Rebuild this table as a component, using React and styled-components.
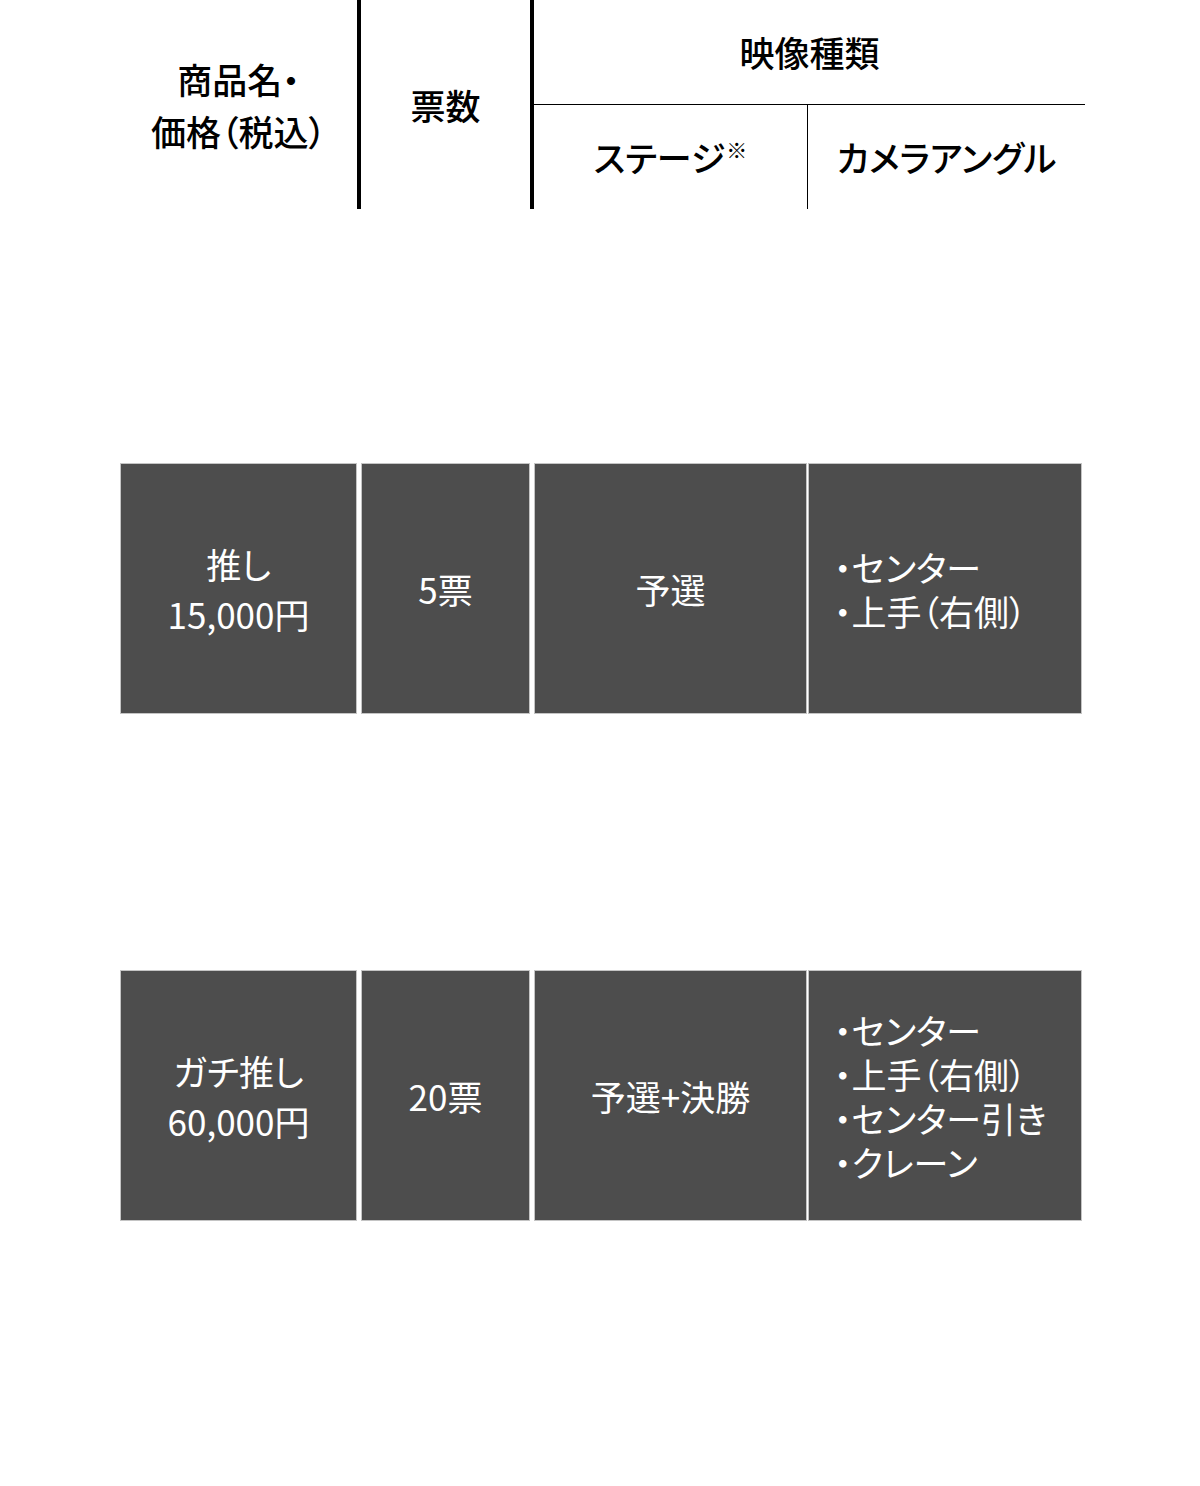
import React from "react";
import styled, { createGlobalStyle } from "styled-components";

const Global = createGlobalStyle`
  html, body { margin: 0; padding: 0; background: #ffffff; }
  body {
    font-family: "Noto Sans CJK JP", "Noto Sans", sans-serif;
    -webkit-font-smoothing: antialiased;
  }
`;

const Page = styled.div`
  width: 1200px;
  min-height: 1486px;
  box-sizing: border-box;
  padding: 0 118px 0 120px;
  display: flex;
  flex-direction: column;
`;

const Header = styled.div`
  display: grid;
  grid-template-columns: 241px 173px 274px 277px;
  grid-template-rows: 105px 104px;
  color: #000;
  font-weight: 500;
  font-size: 35px;
  font-feature-settings: "palt";
`;

const HeadCell = styled.div`
  display: flex;
  align-items: center;
  justify-content: center;
  text-align: center;
  line-height: 52px;
  box-sizing: border-box;
  grid-column: ${(p) => p.$col || "auto"};
  grid-row: ${(p) => p.$row || "auto"};
  border-right: ${(p) => (p.$rule ? `${p.$rule}px solid #000` : "none")};
  border-bottom: ${(p) => (p.$under ? "1px solid #000" : "none")};
`;

const Note = styled.span`
  font-size: 21px;
  font-weight: 400;
  line-height: 1;
  position: relative;
  top: -8px;
  margin-left: 1px;
`;

const Rows = styled.div`
  display: flex;
  flex-direction: column;
  gap: 256px;
  margin-top: 254px;
`;

const Row = styled.div`
  display: grid;
  grid-template-columns: 241px 173px 274px 274px;
  height: 251px;
`;

const Cell = styled.div`
  background: #4d4d4d;
  border: 1px solid #c4c4c4;
  box-sizing: border-box;
  margin-right: ${(p) => p.$gap || 0}px;
  color: #fff;
  font-weight: 400;
  font-size: 35px;
  font-feature-settings: "palt";
  display: flex;
  align-items: center;
  justify-content: ${(p) => (p.$left ? "flex-start" : "center")};
  padding-left: ${(p) => (p.$left ? 25 : 0)}px;
  text-align: center;
  line-height: 50px;
`;

const List = styled.ul`
  list-style: none;
  margin: 0;
  padding: 0;
  text-align: left;
  line-height: 44px;
`;

const Item = styled.li`
  margin: 0;
  white-space: nowrap;
`;

const rows = [
  {
    name: ["推し", "15,000円"],
    votes: "5票",
    stage: "予選",
    angles: ["センター", "上手（右側）"],
  },
  {
    name: ["ガチ推し", "60,000円"],
    votes: "20票",
    stage: "予選+決勝",
    angles: ["センター", "上手（右側）", "センター引き", "クレーン"],
  },
];

export default function App() {
  return (
    <>
      <Global />
      <Page>
        <Header>
          <HeadCell $col="1" $row="1 / span 2" $rule={4}>
            商品名・
            <br />
            価格（税込）
          </HeadCell>
          <HeadCell $col="2" $row="1 / span 2" $rule={4}>
            票数
          </HeadCell>
          <HeadCell $col="3 / span 2" $row="1" $under>
            映像種類
          </HeadCell>
          <HeadCell $col="3" $row="2" $rule={1}>
            ステージ
            <Note>※</Note>
          </HeadCell>
          <HeadCell $col="4" $row="2">
            カメラアングル
          </HeadCell>
        </Header>
        <Rows>
          {rows.map((r, i) => (
            <Row key={i}>
              <Cell $gap={4}>
                <div>
                  {r.name[0]}
                  <br />
                  {r.name[1]}
                </div>
              </Cell>
              <Cell $gap={4}>{r.votes}</Cell>
              <Cell $gap={1}>{r.stage}</Cell>
              <Cell $left>
                <List>
                  {r.angles.map((a) => (
                    <Item key={a}>・{a}</Item>
                  ))}
                </List>
              </Cell>
            </Row>
          ))}
        </Rows>
      </Page>
    </>
  );
}
